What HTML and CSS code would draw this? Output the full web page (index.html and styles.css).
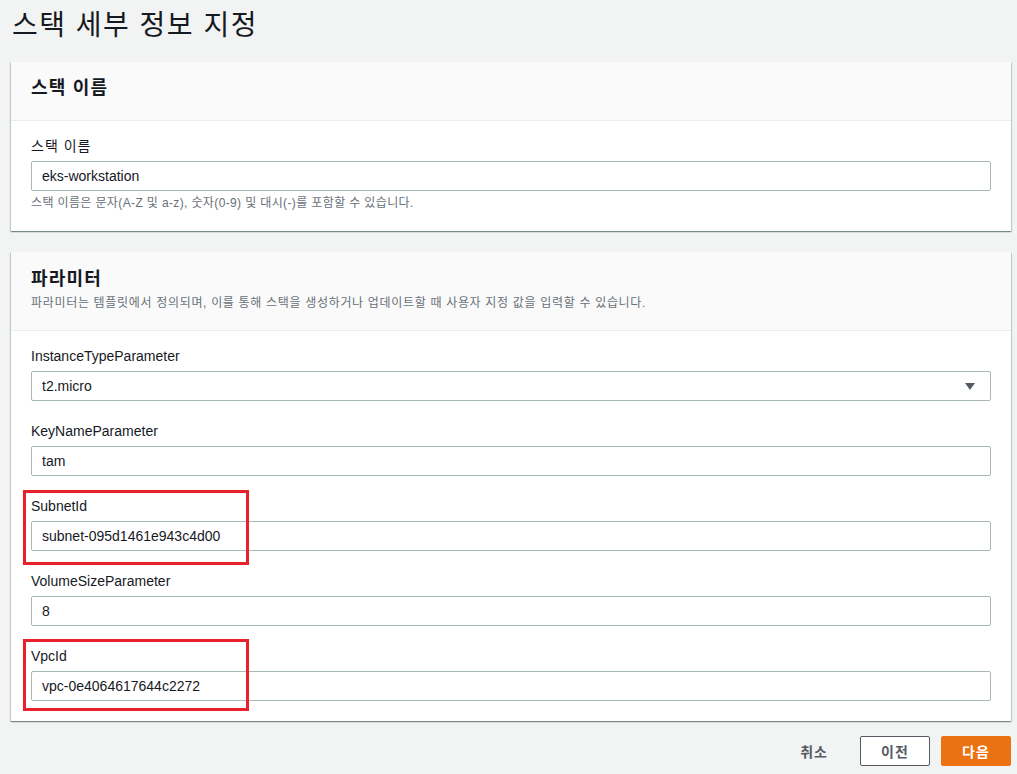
FILE: index.html
```html
<!DOCTYPE html>
<html lang="ko">
<head>
<meta charset="utf-8">
<title>스택 세부 정보 지정</title>
<link rel="stylesheet" href="styles.css">
</head>
<body>
<div class="page">
  <h1 class="page-title">스택 세부 정보 지정</h1>

  <section class="card">
    <header class="card-header">
      <h2 class="card-title">스택 이름</h2>
    </header>
    <div class="card-body">
      <div class="field">
        <label class="field-label field-label-ko">스택 이름</label>
        <div class="input">eks-workstation</div>
        <p class="hint">스택 이름은 문자(A-Z 및 a-z), 숫자(0-9) 및 대시(-)를 포함할 수 있습니다.</p>
      </div>
    </div>
  </section>

  <section class="card">
    <header class="card-header card-header-desc">
      <h2 class="card-title">파라미터</h2>
      <p class="card-desc">파라미터는 템플릿에서 정의되며, 이를 통해 스택을 생성하거나 업데이트할 때 사용자 지정 값을 입력할 수 있습니다.</p>
    </header>
    <div class="card-body fields">
      <div class="field">
        <label class="field-label">InstanceTypeParameter</label>
        <div class="input select">
          <span>t2.micro</span>
          <svg class="caret" width="10" height="7" viewBox="0 0 10 7"><path d="M0 0H10L5 7Z" fill="#545b64"/></svg>
        </div>
      </div>
      <div class="field">
        <label class="field-label">KeyNameParameter</label>
        <div class="input">tam</div>
      </div>
      <div class="field">
        <label class="field-label">SubnetId</label>
        <div class="input">subnet-095d1461e943c4d00</div>
        <span class="mark mark-a"></span>
      </div>
      <div class="field">
        <label class="field-label">VolumeSizeParameter</label>
        <div class="input">8</div>
      </div>
      <div class="field">
        <label class="field-label">VpcId</label>
        <div class="input">vpc-0e4064617644c2272</div>
        <span class="mark mark-b"></span>
      </div>
    </div>
  </section>

  <div class="actions">
    <button class="btn btn-link">취소</button>
    <button class="btn btn-normal">이전</button>
    <button class="btn btn-primary">다음</button>
  </div>
</div>
</body>
</html>
```

FILE: styles.css
```css
* { box-sizing: border-box; }

body {
  margin: 0;
  background: #f2f3f3;
  font-family: "Liberation Sans", "Noto Sans CJK KR", sans-serif;
  color: #16191f;
  font-size: 14px;
}

.page {
  padding: 0 6px 0 11px;
}

.page-title {
  margin: 0 0 18px;
  padding: 8px 0 0 1px;
  font-size: 28px;
  line-height: 36px;
  font-weight: 400;
  letter-spacing: 1.5px;
  color: #16191f;
}

.card {
  background: #fff;
  box-shadow: 0 1px 1px 0 rgba(0, 28, 36, 0.3), 1px 1px 1px 0 rgba(0, 28, 36, 0.15), -1px 1px 1px 0 rgba(0, 28, 36, 0.15);
  margin-bottom: 21px;
}

.card-header {
  background: #fafafa;
  border-bottom: 1px solid #eaeded;
  padding: 15px 20px 21px;
}

.card-header-desc {
  padding: 16px 20px 19px;
}

.card-title {
  margin: 0;
  font-size: 18px;
  line-height: 22px;
  font-weight: 700;
  letter-spacing: 1.2px;
}

.card-desc {
  margin: 5px 0 0;
  font-size: 12px;
  line-height: 16px;
  color: #687078;
  letter-spacing: 0.68px;
}

.card-body {
  padding: 14px 20px 20px;
}

.fields {
  display: flex;
  flex-direction: column;
  gap: 19px;
}

.field {
  position: relative;
  display: flex;
  flex-direction: column;
}

.field-label {
  font-size: 14px;
  line-height: 22px;
  margin-bottom: 4px;
}

.field-label-ko {
  letter-spacing: 1px;
}

.input {
  height: 30px;
  border: 1px solid #aab7b8;
  border-radius: 2px;
  background: #fff;
  padding: 0 10px;
  display: flex;
  align-items: center;
  font-size: 14px;
}

.select {
  justify-content: space-between;
  padding-right: 15px;
}

.hint {
  margin: 4px 0 0;
  font-size: 12px;
  line-height: 16px;
  color: #687078;
  letter-spacing: 0.37px;
}

.mark {
  position: absolute;
  left: -8px;
  width: 226px;
  border: 3px solid #e8212b;
  pointer-events: none;
}

.mark-a { top: -5px; bottom: -14px; }
.mark-b { top: -6px; bottom: -10px; }

.actions {
  display: flex;
  justify-content: flex-end;
  align-items: center;
  gap: 11px;
  margin-top: -6px;
}

.btn {
  font-family: inherit;
  font-size: 14px;
  font-weight: 700;
  height: 30px;
  border-radius: 2px;
  padding: 0;
  letter-spacing: 1px;
  cursor: pointer;
}

.btn-link {
  background: none;
  border: none;
  color: #545b64;
  padding: 0 20px;
  margin-right: 1px;
}

.btn-normal {
  width: 70px;
  background: #fff;
  border: 1px solid #545b64;
  color: #545b64;
}

.btn-primary {
  width: 70px;
  background: #ec7211;
  border: 1px solid #ec7211;
  color: #fff;
}
```
